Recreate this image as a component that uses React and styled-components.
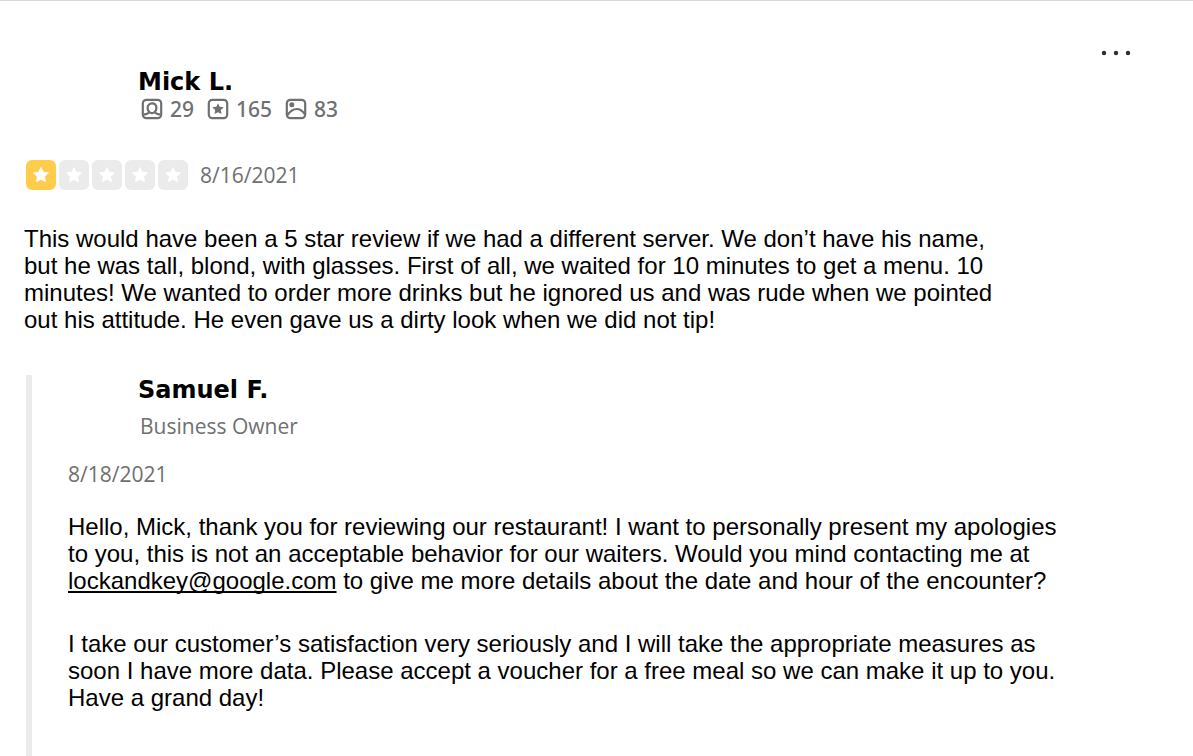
import React from "react";
import styled, { createGlobalStyle } from "styled-components";

const GlobalStyle = createGlobalStyle`
  * { box-sizing: border-box; }
  body {
    margin: 0;
    background: #fff;
    color: #000;
    font-family: "Liberation Sans", Arial, sans-serif;
  }
`;

const Card = styled.article`
  display: flex;
  flex-direction: column;
  border-top: 1px solid #d9d9d9;
  padding: 0 24px;
`;

const Header = styled.header`
  display: flex;
  justify-content: space-between;
  align-items: flex-start;
  padding: 40px 35px 0 114px;
`;

const Person = styled.div`
  padding-top: 26px;
`;

const Name = styled.h2`
  margin: 0;
  font: 700 24px/30px "DejaVu Sans", Verdana, sans-serif;
`;

const Stats = styled.ul`
  display: flex;
  gap: 13px;
  margin: 0;
  padding: 0 0 0 3px;
  list-style: none;
`;

const Stat = styled.li`
  display: flex;
  align-items: center;
  gap: 7px;
  color: #6e7072;
  font: 500 21px/24px "Noto Sans", "Open Sans", sans-serif;
`;

const MenuButton = styled.button`
  display: flex;
  border: 0;
  padding: 0;
  background: none;
  cursor: pointer;
`;

const RatingRow = styled.div`
  display: flex;
  align-items: center;
  gap: 12px;
  margin-top: 39px;
  padding-left: 2px;
`;

const Stars = styled.div`
  display: flex;
  gap: 3px;
`;

const Star = styled.span`
  display: flex;
  align-items: center;
  justify-content: center;
  width: 30px;
  height: 30px;
  border-radius: 6px;
  background: ${(p) => (p.$filled ? "#ffcc4b" : "#ebebeb")};
`;

const Muted = styled.span`
  display: block;
  color: #6e7072;
  font: 400 21px/28px "Open Sans", "Noto Sans", sans-serif;
`;

const Text = styled.p`
  max-width: 1010px;
  margin: 0;
  font-size: 24px;
  line-height: 27px;
`;

const ReviewBody = styled.div`
  max-width: 990px;
  margin-top: 35px;
`;

const Reply = styled.section`
  margin: 42px 0 0 2px;
  border-left: 6px solid #ebebeb;
  padding: 0 0 48px 36px;
`;

const OwnerInfo = styled.div`
  padding: 0 0 20px 70px;
`;

const OwnerRole = styled(Muted)`
  padding: 7px 0 0 2px;
`;

const ReplyBody = styled.div`
  display: flex;
  flex-direction: column;
  gap: 36px;
  margin-top: 25px;
`;

const MailLink = styled.a`
  color: inherit;
  text-decoration: underline;
  text-decoration-thickness: 2px;
  text-decoration-skip-ink: none;
  text-underline-offset: 2px;
`;

const Icon = ({ children }) => (
  <svg width="22" height="22" viewBox="0 0 22 22" fill="none" stroke="currentColor" strokeWidth="2.2" aria-hidden="true">
    <rect x="1.8" y="1.8" width="18.4" height="18.4" rx="3.6" />
    {children}
  </svg>
);

const FriendsIcon = () => (
  <Icon>
    <path d="M8.800 14.400c-1.400-.9-2.200-2.600-2.200-4.500 0-2.600 1.700-4.500 4.400-4.500s4.400 1.900 4.400 4.500c0 1.900-.8 3.600-2.200 4.500" />
    <path d="M8.800 14.400c1.300.9 3.100.9 4.400 0M3 16.300c2.300.1 4-.2 5.400-2.300M19 16.300c-2.300.1-4-.2-5.400-2.300" />
  </Icon>
);

const ReviewsIcon = () => (
  <Icon>
    <path
      d="M11 5.200l1.700 3.600 4 .5-2.900 2.800.7 4-3.500-1.900-3.500 1.900.7-4-2.900-2.800 4-.5z"
      fill="currentColor"
      stroke="none"
    />
  </Icon>
);

const PhotosIcon = () => (
  <Icon>
    <circle cx="6.800" cy="6.800" r="2.5" fill="currentColor" stroke="none" />
    <path d="M2.500 17c2.700-3.800 5.700-6 9.300-6 3.200 0 5.700 1.900 7.900 5" />
  </Icon>
);

const StarShape = () => (
  <svg width="18" height="18" viewBox="0 0 18 18" aria-hidden="true">
    <path
      d="M9 1.500l2.200 4.700 5.200.700-3.800 3.600.900 5.200L9 13.200l-4.500 2.500.900-5.200L1.600 6.900l5.200-.700z"
      fill="#fff"
      stroke="#fff"
      strokeWidth="1"
      strokeLinejoin="round"
    />
  </svg>
);

const stats = [
  { label: "Friends", value: 29, Glyph: FriendsIcon },
  { label: "Reviews", value: 165, Glyph: ReviewsIcon },
  { label: "Photos", value: 83, Glyph: PhotosIcon },
];

const rating = 1;

export default function App() {
  return (
    <>
      <GlobalStyle />
      <Card>
        <Header>
          <Person>
            <Name>Mick L.</Name>
            <Stats>
              {stats.map(({ label, value, Glyph }) => (
                <Stat key={label} title={label}>
                  <Glyph />
                  {value}
                </Stat>
              ))}
            </Stats>
          </Person>
          <MenuButton type="button" aria-label="More options">
            <svg width="36" height="24" viewBox="0 0 36 24" fill="#2d2e2f" aria-hidden="true">
              <circle cx="6" cy="12" r="2.200" />
              <circle cx="18" cy="12" r="2.200" />
              <circle cx="30" cy="12" r="2.200" />
            </svg>
          </MenuButton>
        </Header>
        <RatingRow>
          <Stars role="img" aria-label="1 star rating">
            {[1, 2, 3, 4, 5].map((n) => (
              <Star key={n} $filled={n <= rating}>
                <StarShape />
              </Star>
            ))}
          </Stars>
          <Muted as="time">8/16/2021</Muted>
        </RatingRow>
        <ReviewBody>
          <Text>
            This would have been a 5 star review if we had a different server. We don’t have his name, but he was
            tall, blond, with glasses. First of all, we waited for 10 minutes to get a menu. 10 minutes! We wanted to
            order more drinks but he ignored us and was rude when we pointed out his attitude. He even gave us a dirty
            look when we did not tip!
          </Text>
        </ReviewBody>
        <Reply>
          <OwnerInfo>
            <Name>Samuel F.</Name>
            <OwnerRole>Business Owner</OwnerRole>
          </OwnerInfo>
          <Muted as="time">8/18/2021</Muted>
          <ReplyBody>
            <Text>
              Hello, Mick, thank you for reviewing our restaurant! I want to personally present my apologies to you,
              this is not an acceptable behavior for our waiters. Would you mind contacting me at{" "}
              <MailLink href="mailto:lockandkey@google.com">lockandkey@google.com</MailLink> to give me more details
              about the date and hour of the encounter?
            </Text>
            <Text>
              I take our customer’s satisfaction very seriously and I will take the appropriate measures as soon I
              have more data. Please accept a voucher for a free meal so we can make it up to you. Have a grand day!
            </Text>
          </ReplyBody>
        </Reply>
      </Card>
    </>
  );
}
